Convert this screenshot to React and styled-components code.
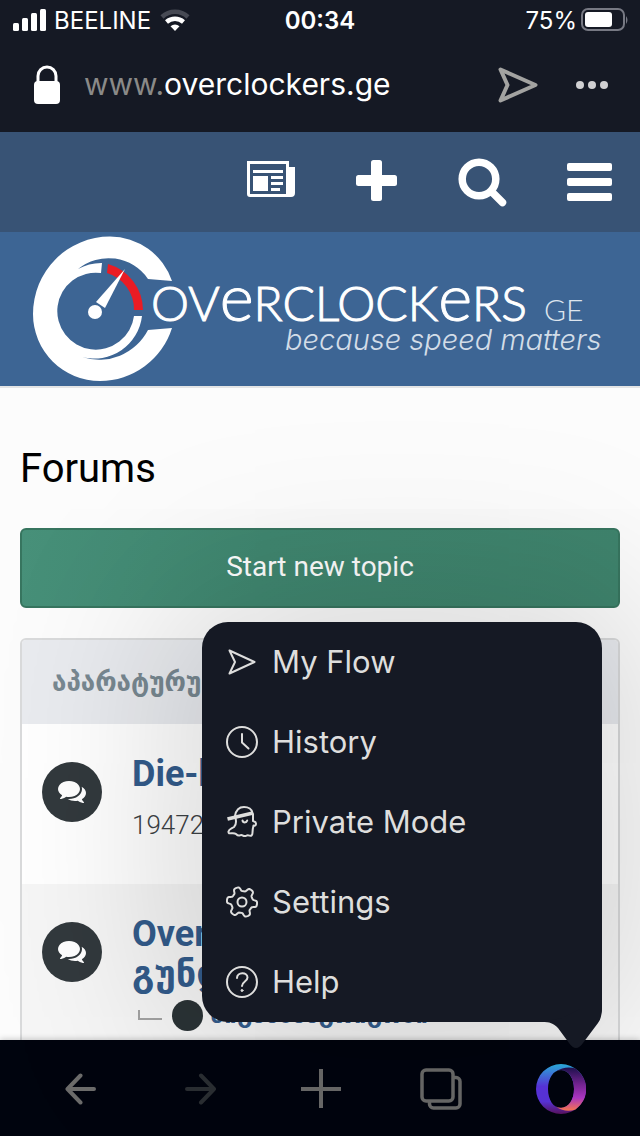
import React from 'react';
import styled, { createGlobalStyle, css } from 'styled-components';

const GlobalStyle = createGlobalStyle`
  * {
    box-sizing: border-box;
  }

  body {
    margin: 0;
    background: #fcfcfc;
    font-family: Roboto, 'DejaVu Sans', sans-serif;
  }

  button {
    padding: 0;
    border: none;
    background: none;
    font: inherit;
    color: inherit;
    cursor: pointer;
  }

  svg {
    display: block;
  }
`;

const Screen = styled.div`
  height: 100vh;
  display: flex;
  flex-direction: column;
  overflow: hidden;
`;

/* browser chrome */

const BrowserTop = styled.header`
  flex: none;
  background: #151924;
  color: #fff;
  font-family: Inter, sans-serif;
`;

const StatusBar = styled.div`
  display: grid;
  grid-template-columns: 1fr auto 1fr;
  align-items: center;
  height: 40px;
  padding: 0 12px;
  font-size: 24px;
`;

const StatusGroup = styled.div`
  display: flex;
  align-items: center;
  justify-content: ${props => (props.$end ? 'flex-end' : 'flex-start')};
  gap: ${props => (props.$end ? '4px' : '8px')};
`;

const Clock = styled.time`
  font-weight: 600;
`;

const AddressBar = styled.div`
  display: flex;
  align-items: center;
  height: 92px;
  padding: 0 32px 2px;
`;

const Url = styled.div`
  flex: 1;
  padding: 0 0 2px 22px;
  font-size: 30px;
  line-height: 40px;

  span {
    color: #8a8a88;
  }
`;

const AddressActions = styled.div`
  display: flex;
  align-items: center;
  gap: 38px;
`;

/* site */

const Page = styled.div`
  flex: 1;
  min-height: 0;
  overflow: hidden;
`;

const SiteNav = styled.nav`
  display: flex;
  align-items: center;
  justify-content: flex-end;
  gap: 61px;
  height: 100px;
  padding: 0 28px 4px 0;
  background: #385375;
  color: #fff;
`;

const Brand = styled.a`
  display: block;
  padding: 2px 30px 2px;
  background: #3d6594;
  border-bottom: 2px solid #e3e4e5;

  svg {
    width: 100%;
  }
`;

const Content = styled.main`
  padding: 57px 20px 0;
`;

const Title = styled.h1`
  margin: 0;
  font-size: 40px;
  font-weight: 400;
  line-height: 48px;
  color: #000;
`;

const StartButton = styled.button`
  && {
    display: block;
    width: 100%;
    height: 80px;
    margin: 35px 0 30px;
    padding-bottom: 4px;
    border: 2px solid #37755f;
    border-radius: 6px;
    background: linear-gradient(100deg, #479079, #408770 40%, #3f846d);
    color: #fff;
    font-size: 28px;
  }
`;

const Category = styled.section`
  border: 2px solid #d9dadb;
  border-radius: 6px;
  overflow: hidden;
`;

const CategoryTitle = styled.h2`
  margin: 0;
  padding: 0 30px;
  background: #e9ebef;
  color: #788891;
  font-size: 26px;
  font-weight: 700;
  line-height: 84px;
  white-space: nowrap;
`;

const ForumRow = styled.article`
  display: flex;
  gap: 30px;
  min-height: 160px;
  padding: 30px 20px 0;
  background: ${props => (props.$shaded ? '#f6f6f6' : '#fff')};
`;

const ForumBadge = styled.div`
  display: flex;
  align-items: center;
  justify-content: center;
  flex: none;
  width: 60px;
  height: 60px;
  margin-top: 8px;
  padding-bottom: 2px;
  border-radius: 50%;
  background: #32393d;
  color: #fff;
`;

const ForumInfo = styled.div`
  flex: 1;
`;

const ForumName = styled.a`
  display: block;
  color: #335c8c;
  font-size: 36px;
  font-weight: 700;
  line-height: 40px;
  text-decoration: none;
`;

const ForumCount = styled.p`
  margin: 16px 0 0;
  color: #3d4245;
  font-size: 26px;
  font-weight: 300;
  line-height: 30px;
`;

const SubForum = styled.div`
  display: flex;
  align-items: center;
  height: 42px;
`;

const Branch = styled.span`
  width: 24px;
  height: 10px;
  margin: 0 10px 0 6px;
  border: solid #a3a3a3;
  border-width: 0 0 2px 2px;
`;

const Dot = styled.span`
  width: 31px;
  height: 31px;
  margin-right: 7px;
  border-radius: 50%;
  background: #2b3336;
`;

const SubLink = styled.a`
  flex: 1;
  color: #335c8c;
  font-size: 24px;
  font-weight: 700;
  line-height: 30px;
  text-decoration: none;
`;

/* bottom bar and the menu that opens from it */

const BottomArea = styled.footer`
  position: relative;
  flex: none;
`;

const BottomBar = styled.nav`
  display: grid;
  grid-template-columns: repeat(5, 1fr);
  height: 96px;
  padding: 2px 19px 0 21px;
  background: #00040e;
  box-shadow: 0 -1px 6px rgba(0, 0, 0, 0.2);
  color: #6c6c6b;
`;

const BarButton = styled.button`
  display: flex;
  align-items: center;
  justify-content: center;

  ${props =>
    props.disabled &&
    css`
      && {
        color: #2b2f33;
      }
    `}
`;

const Menu = styled.ul`
  position: absolute;
  right: 38px;
  bottom: calc(100% + 18px);
  width: 400px;
  margin: 0;
  padding: 0;
  list-style: none;
  border-radius: 26px 26px 14px 26px;
  background: #151924;
  box-shadow: 0 0 180px 30px rgba(0, 0, 0, 0.17);
  color: #dededd;
  font-family: Inter, sans-serif;
`;

const MenuButton = styled.button`
  && {
    display: flex;
    align-items: center;
    gap: 14px;
    width: 100%;
    height: 80px;
    padding: 0 24px;
    font-size: 31px;
    text-align: left;
  }
`;

const MenuLabel = styled.span`
  padding-bottom: 2px;
`;

const Tail = styled.svg`
  position: absolute;
  right: 0;
  top: calc(100% - 14px);
`;

const line = {
  fill: 'none',
  stroke: 'currentColor',
  strokeLinecap: 'round',
  strokeLinejoin: 'round'
};

const SignalIcon = () => (
  <svg width="34" height="22" viewBox="0 0 34 22" fill="currentColor">
    <rect x="1" y="14" width="6" height="8" rx="1.5" />
    <rect x="10" y="9" width="6" height="13" rx="1.5" />
    <rect x="19" y="4" width="6" height="18" rx="1.5" />
    <rect x="28" y="0" width="6" height="22" rx="1.5" />
  </svg>
);

const WifiIcon = () => (
  <svg width="32" height="24" viewBox="1 0 32 24">
    <path d="M4 9a19 19 0 0 1 26 0" fill="none" stroke="#474a54" strokeWidth="4.500" />
    <path d="M8.500 14a13 13 0 0 1 17 0" fill="none" stroke="#fff" strokeWidth="4.500" />
    <path d="M12.500 18.200a7 7 0 0 1 9 0L17 23z" fill="#fff" />
  </svg>
);

const BatteryIcon = () => (
  <svg width="47" height="24" viewBox="0 0 47 24">
    <rect x="1" y="1" width="42" height="21" rx="6" fill="none" stroke="#777983" strokeWidth="2" />
    <rect x="4" y="4" width="27" height="15" rx="3" fill="#fff" />
    <path d="M45 8q3 4 0 8z" fill="#777983" />
  </svg>
);

const LockIcon = () => (
  <svg width="30" height="40" viewBox="0 0 30 40">
    <path d="M6 18v-7a9 9 0 0 1 18 0v7" fill="none" stroke="#fff" strokeWidth="3" />
    <rect x="2" y="16" width="26" height="23" rx="4" fill="#fff" />
  </svg>
);

const SendIcon = () => (
  <svg width="40" height="36" viewBox="0 0 40 36" {...line} color="#a3a3a1" strokeWidth="4">
    <path d="M2.500 2.500L37.500 18 2.500 33.500l7-15.500z" />
  </svg>
);

const DotsIcon = () => (
  <svg width="32" height="10" viewBox="0 0 32 10" fill="#d0d0d2">
    <circle cx="4" cy="5" r="4" />
    <circle cx="16" cy="5" r="4" />
    <circle cx="28" cy="5" r="4" />
  </svg>
);

const NewsIcon = () => (
  <svg width="48" height="38" viewBox="0 0 48 38">
    <path
      fill="currentColor"
      fillRule="evenodd"
      d="M0 0h42v6h6v26a4 4 0 0 1-4 4H3a3 3 0 0 1-3-3zM3 3v30h36V3zM6 9h30v3H6zM6 15h15v15H6zM24 15h12v3H24zM24 21h12v3H24zM24 27h9v3h-9z"
    />
  </svg>
);

const PlusIcon = () => (
  <svg width="41" height="41" viewBox="0 0 41 41" fill="currentColor">
    <rect x="0" y="15" width="41" height="11" rx="2.500" />
    <rect x="15" y="0" width="11" height="41" rx="2.500" />
  </svg>
);

const SearchIcon = () => (
  <svg width="48" height="44" viewBox="0 0 48 44" overflow="visible" {...line}>
    <circle cx="21" cy="21" r="16.800" strokeWidth="7.500" />
    <path d="M35 35l9.500 9.500" strokeWidth="7.500" />
  </svg>
);

const BarsIcon = () => (
  <svg width="45" height="35" viewBox="0 0 45 35" overflow="visible" fill="currentColor">
    <rect x="0" y="0" width="45" height="8" rx="2" />
    <rect x="0" y="15" width="45" height="8" rx="2" />
    <rect x="0" y="30" width="45" height="8" rx="2" />
  </svg>
);

const CommentsIcon = () => (
  <svg width="28" height="28" viewBox="0 0 1792 1792" fill="currentColor">
    <path d="M1408 768q0 139-94 257t-256.500 186.500-353.500 68.500q-86 0-176-16-124 88-278 128-36 9-86 16h-3q-11 0-20.500-8t-11.500-21q-1-3-1-6.500t.5-6.500 2-6l2.500-5 3.500-5.500 4-5 4.500-5 4-4.500q5-6 23-25t26-29.500 22.500-29 25-38.500 20.500-44q-124-72-195-177t-71-224q0-139 94-257t256.500-186.500 353.500-68.500 353.500 68.500 256.500 186.500 94 257zm384 256q0 120-71 224.500t-195 176.500q10 24 20.500 44t25 38.500 22.500 29 26 29.500 23 25q1 1 4 4.500t4.500 5 4 5 3.500 5.500l2.500 5 2 6 .5 6.500-1 6.500q-3 14-13 22t-22 7q-50-7-86-16-154-40-278-128-90 16-176 16-271 0-472-132 58 4 88 4 161 0 309-45t264-129q125-92 192-212t67-254q0-77-23-152 129 71 204 178t75 230z" />
  </svg>
);

const Logo = () => (
  <svg viewBox="30 234 580 150" fill="#fff" role="img" aria-label="Overclockers GE">
    <path d="M172 281A65.500 65.500 0 0 0 110 236.500A77 77.500 0 0 0 33 314A67 67 0 0 0 100 381A75.500 75.500 0 0 0 172 328L148 330A55 55 0 0 1 82 357A48 48 0 0 0 142 316L134 316A38.500 38.500 0 1 1 101 273L102 263A48 48 0 0 0 78 269A48 48 0 0 1 148 279Z" />
    <path d="M108 264A48 48 0 0 1 143 310H134A38 38 0 0 0 107 273Z" fill="#ea1c24" />
    <path d="M125 269L105 308L96 302Z" />
    <circle cx="95" cy="312" r="7" />
    <g fontFamily="Lato, sans-serif" fontWeight="300">
      <text x="151" y="321" fontSize="48" stroke="#fff" strokeWidth="1">
        OV<tspan fontSize="65">e</tspan>RCLOCK<tspan fontSize="65">e</tspan>RS
      </text>
      <text x="544" y="321" fontSize="30" fill="#dde5ee">GE</text>
    </g>
    <text
      x="285"
      y="350"
      fontFamily="Inter, sans-serif"
      fontSize="29"
      fontWeight="300"
      fontStyle="italic"
      fill="#d3dde8"
    >
      because speed matters
    </text>
  </svg>
);

const FlowIcon = () => (
  <svg width="32" height="32" viewBox="0 0 32 32" {...line} strokeWidth="2">
    <path d="M3.500 4.500L28.500 16 3.500 27.500l5.500-11.500z" />
  </svg>
);

const HistoryIcon = () => (
  <svg width="32" height="32" viewBox="0 0 32 32" {...line} strokeWidth="2">
    <circle cx="16" cy="16" r="15" />
    <path d="M16 8v8.500l6.500 6" />
  </svg>
);

const PrivateIcon = () => (
  <svg width="32" height="32" viewBox="0 0 32 32" {...line} strokeWidth="2">
    <path d="M9 10C10 4 13.500 1 18 1s8 2.500 8.500 6" />
    <path d="M1.500 13L27 7" strokeWidth="3.800" strokeLinecap="butt" />
    <path d="M9.500 12c1 4 .500 7-1.500 9-2 1.500-5 2-5.500 4.500-.300 2 1 2 2.500 1.800 2-.300 3.500-.500 5 .700 1.500 1.500 2.500 2 4 1.300 1-.500 2-.300 3 .300 1.500 1 2.500.500 3.500 0 1-.600 2-.300 3 0 2 .500 3-.600 3-3 0-3 .500-5 1-7 2 .300 2.500-.500 2.500-2s-1-2-3-2.500V8" />
    <path d="M16.500 14.500c.500 2.500 4 2.500 4.700 0" />
  </svg>
);

// outline of a six-toothed wheel, sampled around the centre
const gearPoints = Array.from({ length: 120 }, (_, i) => {
  const a = (i / 120) * Math.PI * 2;
  const r = 13 + 2.2 * Math.tanh(2.2 * Math.cos(6 * (a + 0.14)));
  return `${(16 + r * Math.cos(a)).toFixed(2)},${(16 - r * Math.sin(a)).toFixed(2)}`;
}).join(' ');

const SettingsIcon = () => (
  <svg width="32" height="32" viewBox="0 0 32 32" {...line} strokeWidth="2">
    <polygon points={gearPoints} />
    <circle cx="16" cy="16" r="4.500" />
  </svg>
);

const HelpIcon = () => (
  <svg width="32" height="32" viewBox="0 0 32 32" {...line} strokeWidth="2">
    <circle cx="16" cy="16" r="15" />
    <path d="M11 12c0-6 10.500-6.500 10.500-.500 0 4-5.500 4-5.500 8.500" />
    <circle cx="16" cy="24.500" r="1" fill="currentColor" strokeWidth="1" />
  </svg>
);

const ArrowIcon = ({ forward }) => (
  <svg width="32" height="32" viewBox="0 0 32 32" {...line} strokeWidth="4">
    <path d={forward ? 'M2 16h27M16 2.500l13 13.500-13 13.500' : 'M29 16H3M15.500 2.500L2.500 16l13 13.500'} />
  </svg>
);

const NewTabIcon = () => (
  <svg width="40" height="40" viewBox="0 0 40 40" {...line} strokeLinecap="butt" strokeWidth="4">
    <path d="M0 20h40M20 0v39" />
  </svg>
);

const TabsIcon = () => (
  <svg width="42" height="42" viewBox="0 0 42 42" {...line} strokeWidth="3.500">
    <rect x="2" y="2" width="31" height="31" rx="4" />
    <path d="M34 9.500h2a4 4 0 0 1 4 4V36a4 4 0 0 1-4 4H13.500a4 4 0 0 1-4-4v-2" />
  </svg>
);

const OperaIcon = () => (
  <svg width="50" height="50" viewBox="0 0 50 50">
    <defs>
      <linearGradient id="operaLeft" x1="0" y1="0" x2="0" y2="1">
        <stop offset="0" stopColor="#2cb4e4" />
        <stop offset="0.450" stopColor="#5a34e0" />
        <stop offset="0.750" stopColor="#5a34dc" />
        <stop offset="1" stopColor="#5a1260" />
      </linearGradient>
      <linearGradient id="operaRight" x1="0" y1="0" x2="0" y2="1">
        <stop offset="0" stopColor="#1f1250" />
        <stop offset="0.400" stopColor="#7a2698" />
        <stop offset="0.700" stopColor="#b037c8" />
        <stop offset="1" stopColor="#ff7a50" />
      </linearGradient>
    </defs>
    <path
      fillRule="evenodd"
      fill="url(#operaLeft)"
      d="M25 0a25 25 0 1 1 0 50a25 25 0 1 1 0-50zM25 6C17.500 6 12 14 12 25s5.500 19 13 19 13-8 13-19S32.500 6 25 6z"
    />
    <path
      fill="url(#operaRight)"
      d="M20 7.500C26 3 34 2.500 39.500 4.500A25 25 0 0 1 39.500 45.500C33 48 26 47 20 42.500C30 47 38 38 38 25S30 3 20 7.500z"
    />
  </svg>
);

const menuItems = [
  { label: 'My Flow', Icon: FlowIcon },
  { label: 'History', Icon: HistoryIcon },
  { label: 'Private Mode', Icon: PrivateIcon },
  { label: 'Settings', Icon: SettingsIcon },
  { label: 'Help', Icon: HelpIcon }
];

const App = () => (
  <Screen>
    <GlobalStyle />
    <BrowserTop>
      <StatusBar>
        <StatusGroup>
          <SignalIcon />
          <span>BEELINE</span>
          <WifiIcon />
        </StatusGroup>
        <Clock>00:34</Clock>
        <StatusGroup $end>
          <span>75%</span>
          <BatteryIcon />
        </StatusGroup>
      </StatusBar>
      <AddressBar>
        <LockIcon />
        <Url>
          <span>www.</span>overclockers.ge
        </Url>
        <AddressActions>
          <button aria-label="Send to My Flow"><SendIcon /></button>
          <button aria-label="More"><DotsIcon /></button>
        </AddressActions>
      </AddressBar>
    </BrowserTop>

    <Page>
      <SiteNav>
        <button aria-label="News"><NewsIcon /></button>
        <button aria-label="Create"><PlusIcon /></button>
        <button aria-label="Search"><SearchIcon /></button>
        <button aria-label="Menu"><BarsIcon /></button>
      </SiteNav>
      <Brand href="#home">
        <Logo />
      </Brand>
      <Content>
        <Title>Forums</Title>
        <StartButton>Start new topic</StartButton>
        <Category>
          <CategoryTitle>აპარატურული</CategoryTitle>
          <ForumRow>
            <ForumBadge><CommentsIcon /></ForumBadge>
            <ForumInfo>
              <ForumName href="#die-hard">Die-hard</ForumName>
              <ForumCount>19472</ForumCount>
            </ForumInfo>
          </ForumRow>
          <ForumRow $shaded>
            <ForumBadge><CommentsIcon /></ForumBadge>
            <ForumInfo>
              <ForumName href="#team">
                Overclock
                <br />
                გუნდი
              </ForumName>
              <SubForum>
                <Branch />
                <Dot />
                <SubLink href="#sub">სიგააბააგრიგობი</SubLink>
              </SubForum>
            </ForumInfo>
          </ForumRow>
        </Category>
      </Content>
    </Page>

    <BottomArea>
      <BottomBar>
        <BarButton aria-label="Back"><ArrowIcon /></BarButton>
        <BarButton aria-label="Forward" disabled><ArrowIcon forward /></BarButton>
        <BarButton aria-label="New tab"><NewTabIcon /></BarButton>
        <BarButton aria-label="Tabs"><TabsIcon /></BarButton>
        <BarButton aria-label="Opera menu"><OperaIcon /></BarButton>
      </BottomBar>
      <Menu>
        {menuItems.map(({ label, Icon }) => (
          <li key={label}>
            <MenuButton>
              <Icon />
              <MenuLabel>{label}</MenuLabel>
            </MenuButton>
          </li>
        ))}
        <Tail width="60" height="41" viewBox="0 0 60 41" fill="#151924" aria-hidden="true">
          <path d="M0 14C8 14 11 15 16 20L27 35Q34 45 41 35L56 15Q60 10 60 0H40L20 10z" />
        </Tail>
      </Menu>
    </BottomArea>
  </Screen>
);

export default App;
